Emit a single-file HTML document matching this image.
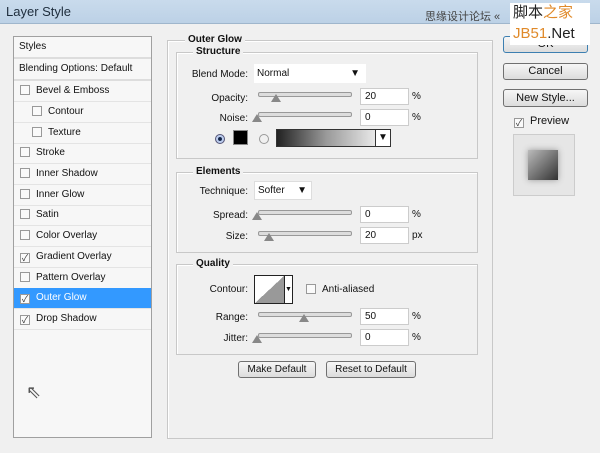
<html><head><style>
*{box-sizing:border-box}
body{margin:0;width:600px;height:453px;overflow:hidden;background:#f0f0f0;font-family:"Liberation Sans","Noto Sans CJK SC",sans-serif;font-size:10px;color:#111;position:relative}
.a{position:absolute}
.tb{left:0;top:0;width:600px;height:24px;background:linear-gradient(#c9dbec,#bcd1e6);border-bottom:1px solid #9fb6cc}
.fs{border:1px solid #c8c8c8;box-shadow:inset 1px 1px 0 #fff}
.lg{background:#f0f0f0;padding:0 3px;font-weight:bold;font-size:10px}
.row{left:14px;width:137px;height:21px;line-height:20px;border-bottom:1px solid #e4e4e4}
.cb{display:inline-block;width:10px;height:10px;border:1px solid #999;background:#fafafa;vertical-align:-2px;margin-right:6px;font-size:9px;line-height:9px;text-align:center;color:#333}
.lab{text-align:right;width:70px}
.sl{height:5px;border:1px solid #999;border-radius:2px;background:#ddd;width:94px}
.th{width:0;height:0;border-left:5px solid transparent;border-right:5px solid transparent;border-bottom:8px solid #888}
.in{background:#fff;border:1px solid #ccc;width:49px;height:17px;line-height:15px;padding-left:4px}
.btn{border:1px solid #707070;border-radius:3px;background:linear-gradient(#f6f6f6,#dcdcdc);text-align:center;font-size:11px}
.wm{z-index:5}
</style></head><body>
<div class="a tb"></div>
<div class="a" style="left:6px;top:4px;font-size:13px;color:#1e2d3c">Layer Style</div>
<div class="a" style="left:425px;top:8px;font-size:11px;color:#444">思缘设计论坛 «</div>
<div class="a wm" style="left:510px;top:3px;width:80px;height:42px;background:#fff"></div>
<div class="a wm" style="left:513px;top:4px;font-size:15px;line-height:17px;color:#222">脚本<span style="color:#e08a2a">之家</span></div>
<div class="a wm" style="left:513px;top:25px;font-size:15px;line-height:17px;color:#e08a2a">JB51<span style="color:#222">.Net</span></div>

<div class="a" style="left:13px;top:36px;width:139px;height:402px;border:1px solid #a0a0a0;background:#f7f7f7"></div>
<div class="a row" style="top:37px;padding-left:5px;border-bottom:2px solid #ddd;height:22px">Styles</div>
<div class="a row" style="top:59px;padding-left:5px;border-bottom:2px solid #ddd;height:22px">Blending Options: Default</div>
<div class="a row" style="top:81px;padding-left:6px"><span class="cb"></span>Bevel &amp; Emboss</div>
<div class="a row" style="top:102px;padding-left:18px"><span class="cb"></span>Contour</div>
<div class="a row" style="top:123px;padding-left:18px"><span class="cb"></span>Texture</div>
<div class="a row" style="top:143px;padding-left:6px"><span class="cb"></span>Stroke</div>
<div class="a row" style="top:164px;padding-left:6px"><span class="cb"></span>Inner Shadow</div>
<div class="a row" style="top:185px;padding-left:6px"><span class="cb"></span>Inner Glow</div>
<div class="a row" style="top:205px;padding-left:6px"><span class="cb"></span>Satin</div>
<div class="a row" style="top:226px;padding-left:6px"><span class="cb"></span>Color Overlay</div>
<div class="a row" style="top:247px;padding-left:6px"><span class="cb">✓</span>Gradient Overlay</div>
<div class="a row" style="top:268px;padding-left:6px"><span class="cb"></span>Pattern Overlay</div>
<div class="a row" style="top:288px;padding-left:6px;background:#3399ff;color:#fff"><span class="cb">✓</span>Outer Glow</div>
<div class="a row" style="top:309px;padding-left:6px"><span class="cb">✓</span>Drop Shadow</div>
<div class="a" style="left:26px;top:382px;font-size:18px;color:#555">⇖</div>

<div class="a fs" style="left:167px;top:40px;width:326px;height:399px"></div>
<div class="a lg" style="left:185px;top:34px">Outer Glow</div>
<div class="a fs" style="left:176px;top:52px;width:302px;height:107px"></div>
<div class="a lg" style="left:193px;top:46px">Structure</div>
<div class="a lab" style="left:178px;top:69px">Blend Mode:</div>
<div class="a" style="left:254px;top:64px;width:112px;height:19px;background:#fff;line-height:19px;padding-left:3px">Normal<span class="a" style="right:6px;top:0">▼</span></div>
<div class="a lab" style="left:178px;top:93px">Opacity:</div>
<div class="a sl" style="left:258px;top:92px"></div><div class="a th" style="left:271px;top:94px"></div>
<div class="a in" style="left:360px;top:88px">20</div><div class="a" style="left:412px;top:91px">%</div>
<div class="a lab" style="left:178px;top:113px">Noise:</div>
<div class="a sl" style="left:258px;top:112px"></div><div class="a th" style="left:252px;top:114px"></div>
<div class="a in" style="left:360px;top:109px">0</div><div class="a" style="left:412px;top:112px">%</div>
<div class="a" style="left:215px;top:134px;width:10px;height:10px;border-radius:50%;border:1px solid #557;background:radial-gradient(#124 30%,#bce 40%)"></div>
<div class="a" style="left:233px;top:130px;width:15px;height:15px;background:#000;border:1px solid #888"></div>
<div class="a" style="left:259px;top:134px;width:10px;height:10px;border-radius:50%;border:1px solid #999"></div>
<div class="a" style="left:276px;top:129px;width:100px;height:18px;border:1px solid #333;background:linear-gradient(90deg,#222,#999 50%,#e8e8e8)"></div>
<div class="a" style="left:375px;top:129px;width:16px;height:18px;border:1px solid #333;background:#fff;text-align:center;line-height:16px">▼</div>

<div class="a fs" style="left:176px;top:172px;width:302px;height:81px"></div>
<div class="a lg" style="left:193px;top:166px">Elements</div>
<div class="a lab" style="left:178px;top:186px">Technique:</div>
<div class="a" style="left:254px;top:181px;width:58px;height:19px;background:#fff;line-height:17px;padding-left:3px;border:1px solid #ddd">Softer<span class="a" style="right:4px;top:0">▼</span></div>
<div class="a lab" style="left:178px;top:210px">Spread:</div>
<div class="a sl" style="left:258px;top:210px"></div><div class="a th" style="left:252px;top:212px"></div>
<div class="a in" style="left:360px;top:206px">0</div><div class="a" style="left:412px;top:209px">%</div>
<div class="a lab" style="left:178px;top:231px">Size:</div>
<div class="a sl" style="left:258px;top:231px"></div><div class="a th" style="left:264px;top:233px"></div>
<div class="a in" style="left:360px;top:227px">20</div><div class="a" style="left:412px;top:230px">px</div>

<div class="a fs" style="left:176px;top:264px;width:302px;height:91px"></div>
<div class="a lg" style="left:193px;top:258px">Quality</div>
<div class="a lab" style="left:178px;top:284px">Contour:</div>
<div class="a" style="left:254px;top:275px;width:31px;height:29px;border:1px solid #222;background:linear-gradient(to bottom right,#fff 50%,#999 50%)"></div>
<div class="a" style="left:284px;top:275px;width:9px;height:29px;border:1px solid #222;background:#fff;font-size:7px;line-height:27px;text-align:center">▼</div>
<div class="a" style="left:306px;top:284px"><span class="cb"></span>Anti-aliased</div>
<div class="a lab" style="left:178px;top:312px">Range:</div>
<div class="a sl" style="left:258px;top:312px"></div><div class="a th" style="left:299px;top:314px"></div>
<div class="a in" style="left:360px;top:308px">50</div><div class="a" style="left:412px;top:311px">%</div>
<div class="a lab" style="left:178px;top:333px">Jitter:</div>
<div class="a sl" style="left:258px;top:333px"></div><div class="a th" style="left:252px;top:335px"></div>
<div class="a in" style="left:360px;top:329px">0</div><div class="a" style="left:412px;top:332px">%</div>

<div class="a btn" style="left:238px;top:361px;width:78px;height:17px;line-height:15px;font-size:10px">Make Default</div>
<div class="a btn" style="left:326px;top:361px;width:90px;height:17px;line-height:15px;font-size:10px">Reset to Default</div>

<div class="a btn" style="left:503px;top:36px;width:85px;height:17px;line-height:15px;border-color:#3c7fb1">OK</div>
<div class="a btn" style="left:503px;top:63px;width:85px;height:17px;line-height:15px">Cancel</div>
<div class="a btn" style="left:503px;top:89px;width:85px;height:18px;line-height:16px">New Style...</div>
<div class="a" style="left:514px;top:115px;font-size:11px"><span class="cb">✓</span>Preview</div>
<div class="a" style="left:513px;top:134px;width:62px;height:62px;border:1px solid #ccc;background:#e6e6e6"></div>
<div class="a" style="left:528px;top:150px;width:30px;height:30px;background:linear-gradient(135deg,#bbb,#333);box-shadow:0 0 6px #999"></div>
</body></html>
